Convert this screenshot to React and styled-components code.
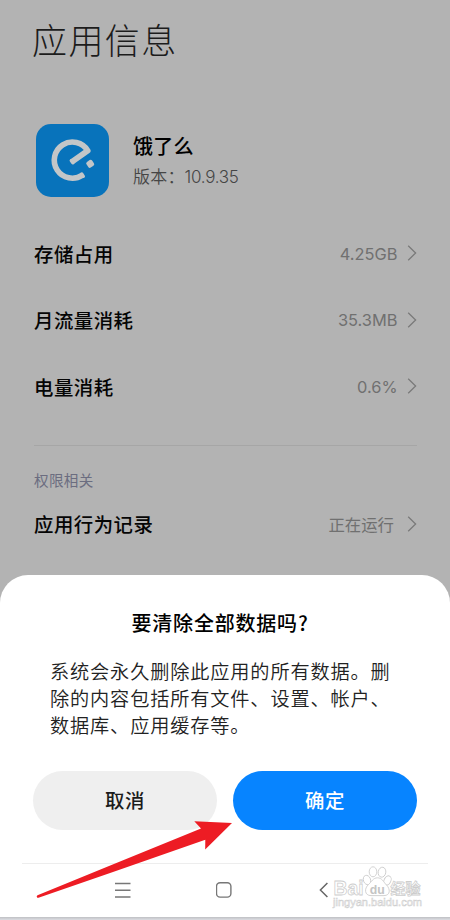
import React from "react";
import styled, { createGlobalStyle } from "styled-components";

const usage = [
  { label: "存储占用", value: "4.25GB" },
  { label: "月流量消耗", value: "35.3MB" },
  { label: "电量消耗", value: "0.6%" },
];

const message = [
  "系统会永久删除此应用的所有数据。删",
  "除的内容包括所有文件、设置、帐户、",
  "数据库、应用缓存等。",
];

const Chevron = () => (
  <svg width="10" height="16" viewBox="0 0 10 16" fill="none">
    <path d="M1.2 0.8L8.6 8L1.2 15.2" stroke="#7a7a7a" strokeWidth="1.3" />
  </svg>
);

const InfoRow = ({ label, value, cjk }) => (
  <Row>
    <RowLabel>{label}</RowLabel>
    <RowValue $cjk={cjk}>{value}</RowValue>
    <Chevron />
  </Row>
);

const AppLogo = () => (
  <Logo viewBox="0 0 73 73" fill="none">
    <rect width="73" height="73" rx="15" fill="#0873bb" />
    <path
      d="M35.8 37.9L51.8 26.6A18.1 18.1 0 1 0 46.4 51.2"
      stroke="#c3c6c8"
      strokeWidth="5.6"
      strokeLinejoin="round"
    />
    <path
      d="M35.2 36.6L36.8 38.9M45.8 49.9L47.4 52.3"
      stroke="#c3c6c8"
      strokeWidth="3.2"
      strokeLinecap="round"
    />
    <rect
      x="50.8"
      y="36.4"
      width="6.8"
      height="6.8"
      rx="1.8"
      transform="rotate(-34 54.2 39.8)"
      fill="#c3c6c8"
    />
  </Logo>
);

const Watermark = () => (
  <Mark viewBox="0 0 96 56">
    <g fill="#fff" stroke="#cdcdcd" strokeWidth="0.9">
      <ellipse cx="37" cy="18" rx="3.6" ry="4.8" transform="rotate(-20 37 18)" />
      <ellipse cx="43" cy="9.8" rx="3.8" ry="5" />
      <ellipse cx="52" cy="10.2" rx="3.8" ry="5" transform="rotate(10 52 10.2)" />
      <ellipse cx="57.5" cy="18.4" rx="3.4" ry="4.8" transform="rotate(25 57.5 18.4)" />
      <path d="M47.5 15.8C43 15.8 41.5 20 38.5 22.5C34 26.5 34.5 33.6 41 33.6H54C60.5 33.6 60.5 27 56.5 23C53.5 20 52 15.8 47.5 15.8Z" />
      <MarkText x="3.5" y="33" textLength="30" $size={21}>Bai</MarkText>
      <MarkText x="39.8" y="31.5" textLength="15" $size={13} $du>du</MarkText>
      <MarkText x="60.5" y="32" textLength="30" $size={15}>经验</MarkText>
      <MarkText x="3" y="44" textLength="89" $size={10} $thin>jingyan.baidu.com</MarkText>
    </g>
  </Mark>
);

const App = () => {
  return (
    <Screen>
      <GlobalStyle />
      <Page>
        <PageTitle>应用信息</PageTitle>
        <AppHeader>
          <AppLogo />
          <AppText>
            <AppName>饿了么</AppName>
            <Version>
              版本：<span>10.9.35</span>
            </Version>
          </AppText>
        </AppHeader>
        {usage.map((item) => (
          <InfoRow key={item.label} label={item.label} value={item.value} />
        ))}
        <Divider />
        <SectionTitle>权限相关</SectionTitle>
        <InfoRow label="应用行为记录" value="正在运行" cjk />
      </Page>

      <Sheet>
        <SheetTitle>要清除全部数据吗?</SheetTitle>
        <Message>
          {message.map((line) => (
            <div key={line}>{line}</div>
          ))}
        </Message>
        <Actions>
          <Button>取消</Button>
          <Button $primary>确定</Button>
        </Actions>
        <NavBar>
          <svg width="16" height="16" viewBox="0 0 16 16">
            <path d="M0 1.5H15.5M0 8.3H15.5M0 15H15.5" stroke="#777" strokeWidth="1.4" />
          </svg>
          <svg width="16" height="16" viewBox="0 0 16 16" fill="none">
            <rect x="0.5" y="0.7" width="14.4" height="14.4" rx="3.6" stroke="#777" strokeWidth="1.4" />
          </svg>
          <svg width="16" height="16" viewBox="0 0 16 16" fill="none">
            <path d="M10.4 1L3.4 8L10.4 15" stroke="#666" strokeWidth="1.5" />
          </svg>
        </NavBar>
      </Sheet>
      <BottomEdge />

      <Watermark />
      <Arrow viewBox="0 0 200 80">
        <path
          d="M2.5 75.2L74 46L166 8.5L159.3 1.2L197 3L170.2 29.5L170.3 19.8L78 52L3.5 77.8A1.4 1.4 0 0 1 2.5 75.2Z"
          fill="#ed1c24"
        />
      </Arrow>
    </Screen>
  );
};

const GlobalStyle = createGlobalStyle`
  * {
    box-sizing: border-box;
  }

  body {
    margin: 0;
    font-family: "Noto Sans CJK SC", sans-serif;
  }
`;

const Screen = styled.div`
  position: relative;
  display: flex;
  flex-direction: column;
  width: 450px;
  height: 920px;
  overflow: hidden;
  background: #b3b3b3;
`;

const Page = styled.div`
  height: 574.5px;
  padding: 14px 33px 0 34px;
`;

const PageTitle = styled.h1`
  margin: 0 0 0 -2px;
  height: 50px;
  line-height: 50px;
  font-size: 35px;
  font-weight: 300;
  letter-spacing: 1.4px;
  color: #1c1c1c;
`;

const AppHeader = styled.div`
  display: flex;
  align-items: center;
  gap: 24px;
  height: 73px;
  margin: 59.5px 0 23.5px 2px;
`;

const Logo = styled.svg`
  width: 73px;
  height: 73px;
`;

const AppText = styled.div`
  padding-top: 2px;
`;

const AppName = styled.div`
  line-height: 30px;
  font-size: 20px;
  font-weight: 500;
  letter-spacing: 0.3px;
  color: #000;
`;

const Version = styled.div`
  line-height: 30px;
  font-size: 17px;
  font-weight: 350;
  letter-spacing: 0.2px;
  color: #454545;

  span {
    font-family: Inter, sans-serif;
    letter-spacing: -0.3px;
  }
`;

const Row = styled.div`
  display: flex;
  align-items: center;
  height: 66.6px;
`;

const RowLabel = styled.div`
  flex: 1;
  font-size: 19.4px;
  font-weight: 500;
  letter-spacing: 0.5px;
  color: #050505;
`;

const RowValue = styled.div`
  margin-right: ${(props) => (props.$cjk ? "13px" : "9.5px")};
  padding-top: 1px;
  font-family: ${(props) => (props.$cjk ? "inherit" : "Inter, sans-serif")};
  font-size: ${(props) => (props.$cjk ? "16.4px" : "16.4px")};
  color: #707070;
`;

const Divider = styled.div`
  height: 1px;
  margin: 25px 0 22.5px;
  background: #a6a6a6;
`;

const SectionTitle = styled.div`
  height: 24px;
  line-height: 24px;
  font-size: 14.6px;
  letter-spacing: 0.3px;
  color: #6b6d80;

  & + ${Row} {
    margin-top: -2px;
  }
`;

const Sheet = styled.div`
  height: 342.5px;
  padding: 32px 33px 0;
  border-radius: 28px 28px 0 0;
  background: #fff;
`;

const SheetTitle = styled.h2`
  margin: 0;
  padding-left: 98.5px;
  height: 32px;
  line-height: 32px;
  font-size: 20px;
  font-weight: 500;
  letter-spacing: 0.8px;
  color: #000;
`;

const Message = styled.div`
  margin: 19px 0 32.5px 17px;
  line-height: 27px;
  font-size: 19.2px;
  font-weight: 350;
  letter-spacing: 0.85px;
  white-space: nowrap;
  color: #222;
`;

const Actions = styled.div`
  display: flex;
  gap: 16px;
`;

const Button = styled.button`
  flex: 1;
  height: 58.5px;
  padding: 0 0 1px;
  border: none;
  border-radius: 30px;
  font-family: inherit;
  font-size: 19.4px;
  font-weight: 500;
  letter-spacing: 0.5px;
  background: ${(props) => (props.$primary ? "#0784ff" : "#efefef")};
  color: ${(props) => (props.$primary ? "#fff" : "#1c1c1c")};
`;

const NavBar = styled.div`
  display: flex;
  align-items: center;
  gap: 85px;
  height: 54px;
  margin: 33px -11px 0;
  padding-left: 93px;
  border-top: 1px solid #ededed;
`;

const BottomEdge = styled.div`
  height: 3px;
  background: linear-gradient(#bfc0c4, #dcdde2);
`;

const Mark = styled.svg`
  position: absolute;
  left: 330px;
  top: 862px;
  width: 96px;
  height: 56px;
`;

const MarkText = styled.text.attrs({ lengthAdjust: "spacingAndGlyphs" })`
  font-family: "Liberation Sans", "Noto Sans CJK SC", sans-serif;
  font-size: ${(props) => props.$size}px;
  font-weight: ${(props) => (props.$thin ? 400 : 700)};
  fill: ${(props) => (props.$du ? "#c4c4c4" : "#fff")};
  stroke: ${(props) => (props.$du ? "none" : "#cdcdcd")};
  stroke-width: ${(props) => (props.$thin ? 0.5 : 0.8)};
`;

const Arrow = styled.svg`
  position: absolute;
  left: 35px;
  top: 820px;
  width: 200px;
  height: 80px;
`;

export default App;
